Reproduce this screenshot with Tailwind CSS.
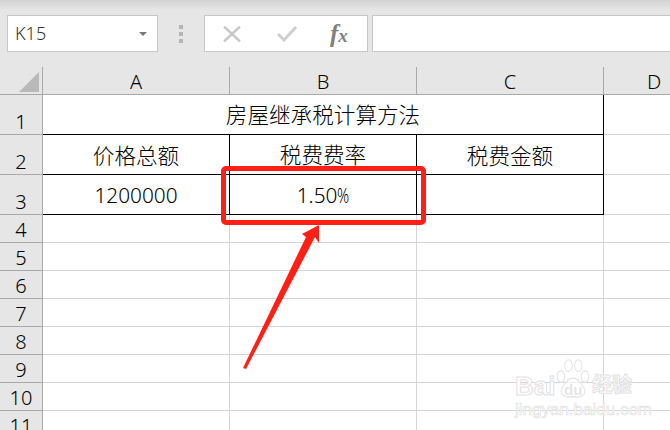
<!DOCTYPE html>
<html lang="zh-CN">
<head>
    <meta charset="UTF-8">
    <title>房屋继承税计算方法</title>
    <script src="https://cdn.jsdelivr.net/npm/@tailwindcss/browser@4"></script>
</head>
<body class="bg-white">
    <div class="relative w-[670px] h-[430px] overflow-hidden bg-white text-black font-['Noto_Sans','Noto_Sans_CJK_SC',sans-serif]">
        <!-- Formula bar -->
        <div class="h-[67px] bg-[#e6e6e6] bg-gradient-to-b from-[#d2d2d2] to-[#e6e6e6] to-[10px] flex items-start pt-[15px] pl-[7px]">
            <div class="w-[151px] h-[37px] bg-white border border-[#c6c6c6] flex items-center justify-between pl-[7px] pr-[10px]">
                <span class="text-[18px] font-light text-[#333]">K15</span>
                <span class="w-0 h-0 border-x-[4px] border-x-transparent border-t-[4px] border-t-[#777]"></span>
            </div>
            <div class="w-[46px] flex flex-col items-center gap-[3px] pt-[10px]">
                <span class="w-[4px] h-[4px] bg-[#b4b4b4]"></span>
                <span class="w-[4px] h-[4px] bg-[#b4b4b4]"></span>
                <span class="w-[4px] h-[4px] bg-[#b4b4b4]"></span>
            </div>
            <div class="w-[164px] h-[37px] bg-white border border-[#c6c6c6] flex items-center">
                <svg class="ml-[18px]" width="18" height="16" viewBox="0 0 18 16"><path d="M1 0.5 L17 15.5 M17 0.5 L1 15.5" stroke="#c8c8c8" stroke-width="2.4" fill="none"/></svg>
                <svg class="ml-[36px]" width="20" height="16" viewBox="0 0 20 16"><path d="M1 8 L7 14 L19 1" stroke="#cfcfcf" stroke-width="3" fill="none"/></svg>
                <span class="ml-[33px] leading-none italic font-bold text-[#808080] font-['Liberation_Serif',serif]"><span class="text-[25px]">f</span><span class="text-[19px]">x</span></span>
            </div>
            <div class="ml-[4px] flex-1 h-[37px] bg-white border-y border-l border-[#c6c6c6]"></div>
        </div>

        <!-- Sheet -->
        <div id="sheet" class="grid grid-cols-[43px_187px_187px_187px_66px] grid-rows-[28px_40px_40px_40px_repeat(8,28px)]">
            <div class="bg-[#e6e6e6] border-r border-b border-[#a9a9a9] relative">
                <div class="absolute left-[19px] top-[5px] w-0 h-0 border-l-[20px] border-l-transparent border-b-[20px] border-b-[#b9b9b9]"></div>
            </div>
            <div class="bg-[#e6e6e6] border-r border-b border-[#a9a9a9] flex items-center justify-center text-[20px] font-light pt-[3px]">A</div>
            <div class="bg-[#e6e6e6] border-r border-b border-[#a9a9a9] flex items-center justify-center text-[20px] font-light pt-[3px]">B</div>
            <div class="bg-[#e6e6e6] border-r border-b border-[#a9a9a9] flex items-center justify-center text-[20px] font-light pt-[3px]">C</div>
            <div class="bg-[#e6e6e6] border-b border-[#a9a9a9] flex items-center text-[20px] font-light pt-[3px] pl-[43px]">D</div>

            <div class="bg-[#e6e6e6] border-r border-b border-[#a9a9a9] flex items-center justify-center text-[20px] font-light pt-[14px]">1</div>
            <div class="col-span-3 border-r border-b border-black flex items-center justify-center text-[21.6px] font-light pt-[2px]">房屋继承税计算方法</div>
            <div class="border-b border-[#d4d4d4]"></div>

            <div class="bg-[#e6e6e6] border-r border-b border-[#a9a9a9] flex items-center justify-center text-[20px] font-light pt-[14px]">2</div>
            <div class="border-r border-b border-black flex items-center justify-center text-[21.6px] font-light pt-[3px]">价格总额</div>
            <div class="border-r border-b border-black flex items-center justify-center text-[21.6px] font-light pt-[2px]">税费费率</div>
            <div class="border-r border-b border-black flex items-center justify-center text-[21.6px] font-light pt-[3px]">税费金额</div>
            <div class="border-b border-[#d4d4d4]"></div>

            <div class="bg-[#e6e6e6] border-r border-b border-[#a9a9a9] flex items-center justify-center text-[20px] font-light pt-[14px]">3</div>
            <div class="border-r border-b border-black flex items-center justify-center text-[20.8px] font-light pt-[3px]">1200000</div>
            <div class="border-r border-b border-black flex items-center justify-center text-[20.8px] font-light pt-[3px]"><span>1.50<span class="inline-block scale-x-[0.72] origin-left -mr-[5px]">%</span></span></div>
            <div class="border-r border-b border-black"></div>
            <div class="border-b border-[#d4d4d4]"></div>
        </div>

        <!-- Red highlight round B3 -->
        <div class="absolute left-[221px] top-[166px] w-[205px] h-[59px] border-[5px] border-[#ff2015] rounded-[5px]"></div>

        <!-- Arrow -->
        <svg class="absolute left-0 top-0" width="670" height="430" viewBox="0 0 670 430">
            <polygon points="243,368 306,237 302,234 319,225 319,243 315,237 246,369" fill="#ff2015"/>
        </svg>

        <!-- Watermark -->
        <div class="absolute left-[512px] top-[355px] w-[136px] h-[70px] text-white">
            <svg class="absolute left-[43px] top-[3px]" width="36" height="42" viewBox="0 0 48 50" preserveAspectRatio="none">
                <g fill="#fff" fill-opacity="0.6" stroke="#e2e2e2" stroke-width="1.3">
                    <ellipse cx="8" cy="22" rx="5" ry="7"/>
                    <ellipse cx="18" cy="9" rx="5" ry="7"/>
                    <ellipse cx="31" cy="9" rx="5" ry="7"/>
                    <ellipse cx="40" cy="22" rx="5" ry="7"/>
                    <path d="M24 24 C16 24 12 32 9 37 C6 44 14 48 24 46 C34 48 42 44 39 37 C36 32 32 24 24 24 Z"/>
                </g>
            </svg>
            <span class="absolute left-[3px] top-[18px] text-[26px] leading-none font-bold [-webkit-text-stroke:1px_#e2e2e2] font-['Liberation_Sans',sans-serif]">Bai</span>
            <span class="absolute left-[52px] top-[27px] text-[15px] leading-none font-bold text-[#e6e6e6] font-['Liberation_Sans',sans-serif]">du</span>
            <span class="absolute left-[80px] top-[20px] text-[20px] leading-none font-bold [-webkit-text-stroke:1px_#e2e2e2]">经验</span>
            <span class="absolute left-[3px] top-[46px] text-[17px] leading-none text-white [-webkit-text-stroke:0.7px_#e2e2e2] font-['Liberation_Sans',sans-serif]">jingyan.baidu.com</span>
        </div>
    </div>

    <script>
        // blank rows 4 to 11
        const sheet = document.getElementById('sheet');
        for (let r = 4; r <= 11; r++) {
            let html = '<div class="bg-[#e6e6e6] border-r border-b border-[#a9a9a9] flex items-center justify-center text-[20px] font-light pt-[3px]">' + r + '</div>';
            for (let c = 0; c < 3; c++) {
                html += '<div class="border-r border-b border-[#d4d4d4]"></div>';
            }
            html += '<div class="border-b border-[#d4d4d4]"></div>';
            sheet.insertAdjacentHTML('beforeend', html);
        }
    </script>
</body>
</html>
